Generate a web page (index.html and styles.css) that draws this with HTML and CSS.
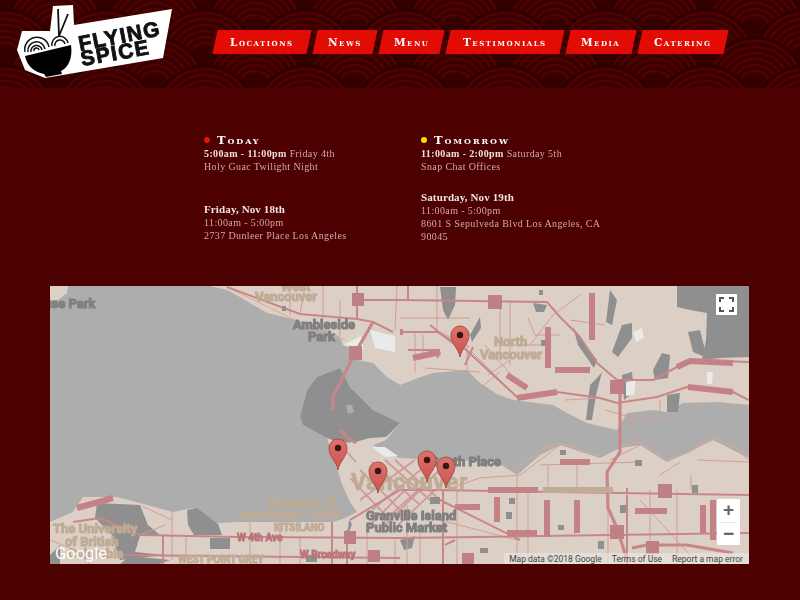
FILE: index.html
```html
<!DOCTYPE html>
<html lang="en">
<head>
<meta charset="utf-8">
<title>Flying Spice</title>
<link rel="stylesheet" href="styles.css">
</head>
<body>
<header class="header">
  <a class="logo" href="#" aria-label="Flying Spice">
    <svg class="logo-svg" viewBox="0 0 190 88" width="190" height="88">
      <polygon class="logo-bg" points="53,6 73,5 74,25 172,9 163,58 45,78 25,70 17,50 22,31 50,31"/>
      <g class="logo-ink">
        <path class="stick" d="M58 9 L59 36 M68 14 L59 36"/>
        <path class="noodle" d="M28 52 A8.500 8.500 0 0 1 45 49 M31 52 A5.500 5.500 0 0 1 42 50 M34 51 A2.500 2.500 0 0 1 39 50 M25 52 A11.500 11.500 0 0 1 49 47"/>
        <path class="noodle" d="M52 46 A8 8 0 0 1 68 43 M55 46 A5 5 0 0 1 65 44"/>
        <path class="bowl" d="M25 56 L71 45 C73 58 68 68 61 71 L62 74 L46 77 L44 74 C34 72 27 66 25 56 Z"/>
      </g>
      <text class="logo-text" transform="translate(80 51) rotate(-11)">FLYING</text>
      <text class="logo-text" transform="translate(82 66) rotate(-10)">SPICE</text>
    </svg>
  </a>
  <nav class="nav">
    <a class="nav-item nav-locations" href="#"><span>Locations</span></a>
    <a class="nav-item nav-news" href="#"><span>News</span></a>
    <a class="nav-item nav-menu" href="#"><span>Menu</span></a>
    <a class="nav-item nav-testimonials" href="#"><span>Testimonials</span></a>
    <a class="nav-item nav-media" href="#"><span>Media</span></a>
    <a class="nav-item nav-catering" href="#"><span>Catering</span></a>
  </nav>
</header>

<main class="main">
  <section class="schedule">
    <div class="column">
      <h2 class="day"><span class="dot dot-red"></span>Today</h2>
      <p class="line"><strong>5:00am - 11:00pm</strong> Friday 4th</p>
      <p class="line">Holy Guac Twilight Night</p>
      <h3 class="date date-far">Friday, Nov 18th</h3>
      <p class="line">11:00am - 5:00pm</p>
      <p class="line">2737 Dunleer Place Los Angeles</p>
    </div>
    <div class="column">
      <h2 class="day"><span class="dot dot-yellow"></span>Tomorrow</h2>
      <p class="line"><strong>11:00am - 2:00pm</strong> Saturday 5th</p>
      <p class="line">Snap Chat Offices</p>
      <h3 class="date">Saturday, Nov 19th</h3>
      <p class="line">11:00am - 5:00pm</p>
      <p class="line">8601 S Sepulveda Blvd Los Angeles, CA<br>90045</p>
    </div>
  </section>

  <section class="map">
    <svg class="map-svg" viewBox="50 286 699 278" width="699" height="278">
      <defs>
        <linearGradient id="pinfill" x1="0" y1="0" x2="0" y2="1">
          <stop offset="0" stop-color="#de746b"/>
          <stop offset="1" stop-color="#c9534d"/>
        </linearGradient>
        <g id="pin">
          <path class="pin-body" d="M0 0 C-1 -8 -9 -13 -9 -22 A9 9 0 0 1 9 -22 C9 -13 1 -8 0 0 Z"/>
          <circle class="pin-dot" cx="0" cy="-22" r="3.200"/>
        </g>
      </defs>
      <rect class="water" x="50" y="286" width="699" height="278"/>

      <!-- land -->
      <path class="land" d="M210 286 L227 290 L240 297 L267 313 L293 319 L318 326 L340 337 L343 345 L360 352 L357 360 L373 363 L387 377 L400 385 L418 378 L433 373 L467 370 L480 383 L497 394 L513 400 L553 405 L567 413 L587 423 L617 430 L627 413 L653 410 L667 412 L683 403 L717 402 L749 405 L749 286 Z"/>
      <path class="land" d="M50 286 L68 286 L67 293 L58 300 L50 300 Z"/>
      <path class="land" d="M50 522 L73 512 L83 497 L117 497 L140 503 L173 512 L193 508 L217 523 L240 522 L333 522 L345 518 L357 512 L350 502 L342 484 L337 468 L327 438 L303 425 L300 417 L307 390 L317 377 L340 368 L350 387 L373 410 L400 423 L386 440 L373 445 L400 458 L440 460 L497 462 L517 475 L540 455 L560 445 L600 458 L620 448 L640 445 L667 462 L683 455 L713 440 L749 458 L749 564 L50 564 Z"/>
      <path class="pale" d="M343 345 L361 336 L364 350 L355 346 Z M370 330 L395 336 L395 352 L375 348 Z M372 447 L385 447 L398 456 L385 457 Z"/>

      <!-- parks -->
      <path class="park" d="M677 286 L677 307 L690 310 L707 313 L706 340 L702 360 L720 358 L749 357 L749 286 Z"/>
      <path class="park" d="M300 417 L307 390 L317 377 L340 368 L350 387 L373 410 L400 423 L386 437 L370 438 L355 442 L340 443 L327 438 L303 425 Z"/>
      <path class="park" d="M97 503 L140 505 L148 525 L160 535 L140 536 L135 552 L165 555 L120 560 L112 535 L95 518 Z"/>
      <path class="park" d="M187 510 L197 508 L218 524 L222 535 L194 535 L188 525 Z M210 538 L230 538 L230 549 L210 549 Z M170 560 L160 564 L120 564 L130 556 Z"/>
      <path class="park" d="M50 555 L60 545 L60 564 L50 564 Z"/>
      <path class="park" d="M440 287 L456 287 L455 305 L448 320 L443 310 Z M470 335 L480 317 L481 328 L472 342 Z M533 303 L547 305 L544 312 L536 312 Z M573 327 L582 340 L597 360 L594 368 L578 345 Z"/>
      <path class="park" d="M610 290 L617 300 L612 325 L606 322 Z M622 325 L632 323 L632 338 L618 357 L612 352 Z M653 370 L662 353 L670 355 L668 378 L655 380 Z M667 395 L680 393 L678 412 L667 412 Z M688 332 L700 330 L707 358 L693 352 Z"/>
      <path class="park" d="M590 385 L597 378 L602 372 L596 395 L592 420 L586 420 Z M622 375 L632 372 L634 392 L624 400 Z"/>
      <path class="park" d="M349 520 L352 524 L347 538 L349 520 Z M400 540 L415 536 L412 548 L404 550 Z"/>

      <!-- water inside park -->
      <path class="water" d="M346 405 L352 405 L354 412 L348 414 Z"/>
      <path class="pale" d="M633 332 L642 328 L644 338 L636 342 Z M626 382 L636 380 L634 395 L626 396 Z M707 372 L713 372 L712 384 L707 384 Z"/>

      <!-- thin roads -->
      <g class="road-thin">
        <path d="M300 314 L305 286 M323 286 L323 318 M290 290 L290 315 M340 300 L340 336 M397 286 L395 330 M437 286 L437 332 M500 300 L500 360 M510 300 L510 365 M415 332 L415 372 M423 335 L423 356 M500 345 L550 345 M400 318 L470 318 M528 318 L535 335 L560 335 M580 295 L553 315 L530 345 M570 320 L605 325"/>
        <path d="M470 350 L510 390 M485 345 L520 385 M500 372 L470 396 M440 332 L470 347 M425 368 L480 372 M467 372 L467 345 M488 375 L510 360"/>
        <path d="M565 400 L600 398 M605 410 L640 420 M640 420 L670 415 M660 400 L660 412 M627 413 L640 440"/>
        <path class="halo" d="M227 287 L295 320 L345 340"/>
      </g>
      <g class="road-thin">
        <path d="M517 475 L517 564 M528 490 L528 564 M650 490 L650 564 M677 490 L677 564 M608 490 L608 564 M457 490 L457 564 M407 505 L407 564 M420 530 L420 564 M395 540 L395 564 M367 525 L367 564 M540 465 L640 462 M548 465 L548 490 M577 462 L577 490 M440 520 L517 540 M450 505 L490 525 M640 500 L690 555 M560 445 L520 475 L480 478 L445 490"/>
        <path d="M172 510 L172 560 M186 537 L186 562 M250 522 L250 564 M280 522 L280 564 M300 537 L300 564 M140 535 L165 525 M142 506 L172 520 M74 522 L100 518 L140 535 M50 540 L75 550 L90 564"/>
        <path d="M680 462 L660 475 M691 475 L691 490 M697 460 L749 462 M730 444 L749 460 M640 445 L610 460"/>
        <path class="halo" d="M515 470 L540 450 L560 443 L600 456 M620 446 L640 442 L667 460 L690 452 L713 437 L749 455"/>
      </g>

      <!-- downtown grid -->
      <path class="road-grid" d="M350 478 L392 522 M360 470 L405 515 M372 462 L420 505 M385 460 L430 500 M395 460 L440 500 M405 490 L370 525 M420 490 L385 525 M435 490 L398 525 M360 500 L415 460 M372 510 L430 462 M385 520 L440 470 M345 450 L356 462"/>

      <!-- main roads -->
      <g class="road">
        <path d="M227 287 L300 314 L357 319 L373 322 L393 332 M357 286 L357 319 M357 300 L400 300 L547 302 L560 317 L580 337 L597 363 L617 380"/>
        <path d="M400 332 L437 332 L463 347 L517 397 L557 392 L600 398 L617 403 L657 397 L687 387 L733 392 L749 400"/>
        <path d="M617 380 L653 380 L677 367 L690 360 L749 362 M437 358 L440 352"/>
        <path d="M473 347 L465 365 M430 325 L455 345 M408 350 L440 350 M408 285 L408 300"/>
        <path d="M117 555 L400 558 M143 535 L237 537 L400 538 M400 538 L749 533 M433 490 L749 495 M332 522 L332 564 M347 530 L347 564 M443 490 L443 564 M627 488 L627 564 M400 490 L445 490 M350 520 L400 490 M455 540 L445 545 M440 500 L520 540"/>
        <path d="M73 522 L100 518 L140 535 M163 535 L163 564"/>
      </g>
      <path class="road road-bold" d="M373 322 L355 353 L333 397 L333 410 M620 390 L620 452 L607 472 L608 508 L617 528 L627 560 M632 548 L647 545 L687 545 L733 553"/>
      <path class="road road-bold" d="M340 430 L348 438 L356 443"/>

      <!-- label-shaped road bands -->
      <g class="band">
        <path d="M592 293 L592 340 M548 327 L548 368 M555 370 L590 370 M507 375 L527 388 M517 398 L557 392 M413 358 L440 352 M677 367 L690 361 L733 363 M688 387 L733 392 M400 332 L403 332"/>
        <path d="M488 490 L538 490 M497 497 L497 522 M547 500 L547 537 M577 500 L577 533 M703 505 L703 533 M713 500 L713 540 M635 511 L667 511 M507 533 L537 533 M455 507 L480 507 M560 462 L590 462 M77 508 L113 498"/>
      </g>
      <path class="band band-tan" d="M543 490 L613 490"/>

      <!-- highway shields -->
      <g class="shield">
        <rect x="352" y="293" width="12" height="13"/>
        <rect x="488" y="295" width="14" height="14"/>
        <rect x="349" y="346" width="13" height="14"/>
        <rect x="610" y="380" width="14" height="14"/>
        <rect x="658" y="484" width="14" height="14"/>
        <rect x="610" y="525" width="14" height="14"/>
        <rect x="646" y="541" width="13" height="13"/>
        <rect x="462" y="553" width="12" height="11"/>
        <rect x="344" y="531" width="12" height="13"/>
        <rect x="368" y="550" width="12" height="12"/>
      </g>

      <!-- small buildings -->
      <g class="blocks">
        <rect x="282" y="306" width="4" height="5"/>
        <rect x="539" y="290" width="4" height="5"/>
        <rect x="541" y="340" width="4" height="6"/>
        <rect x="191" y="520" width="5" height="3"/>
        <rect x="213" y="538" width="4" height="4"/>
        <rect x="509" y="498" width="6" height="6"/>
        <rect x="506" y="512" width="6" height="7"/>
        <rect x="558" y="525" width="6" height="5"/>
        <rect x="620" y="505" width="6" height="8"/>
        <rect x="598" y="541" width="6" height="8"/>
        <rect x="480" y="548" width="8" height="5"/>
        <rect x="560" y="450" width="6" height="5"/>
        <rect x="635" y="460" width="7" height="6"/>
        <rect x="692" y="485" width="6" height="8"/>
        <rect x="306" y="555" width="11" height="7"/>
        <rect x="430" y="497" width="10" height="7"/>
      </g>

      <!-- place labels -->
      <text class="label label-tan" x="281" y="291">West</text>
      <text class="label label-tan" x="255" y="301">Vancouver</text>
      <text class="label label-grey" x="293" y="329">Ambleside</text>
      <text class="label label-grey" x="308" y="341">Park</text>
      <text class="label label-grey" x="0" y="308">Lighthouse Park</text>
      <text class="label label-tan" x="494" y="346">North</text>
      <text class="label label-tan" x="480" y="359">Vancouver</text>
      <text class="label-big" x="351" y="490">Vancouver</text>
      <text class="label label-tan" x="269" y="507">Museum of</text>
      <text class="label label-tan" x="238" y="519">Vancouver - MOV</text>
      <text class="label-small label-tan" x="274" y="531">KITSILANO</text>
      <text class="label-small label-road" x="237" y="541">W 4th Ave</text>
      <text class="label-small label-road" x="300" y="558">W Broadway</text>
      <text class="label-small label-tan" x="178" y="563">WEST POINT GREY</text>
      <text class="label label-tan" x="53" y="533">The University</text>
      <text class="label label-tan" x="65" y="546">of British</text>
      <text class="label label-tan" x="68" y="558">Columbia</text>
      <text class="label label-grey" x="366" y="520">Granville Island</text>
      <text class="label label-grey" x="366" y="532">Public Market</text>
      <text class="label label-grey" x="431" y="466">South Place</text>

      <!-- markers -->
      <use href="#pin" x="460" y="357"/>
      <use href="#pin" x="338" y="470"/>
      <use href="#pin" x="378" y="493"/>
      <use href="#pin" x="427" y="482"/>
      <use href="#pin" x="446" y="488"/>
    </svg>

    <button class="fullscreen" aria-label="Toggle fullscreen view">
      <svg viewBox="0 0 21 21" width="21" height="21">
        <path class="fs-mark" d="M4 8 V4 H8 M13 4 H17 V8 M17 13 V17 H13 M8 17 H4 V13"/>
      </svg>
    </button>
    <div class="zoom">
      <button class="zoom-btn">+</button>
      <span class="zoom-rule"></span>
      <button class="zoom-btn">−</button>
    </div>
    <span class="google">Google</span>
    <div class="attrib">
      <span>Map data ©2018 Google</span>
      <span>Terms of Use</span>
      <span>Report a map error</span>
    </div>
  </section>
</main>
</body>
</html>
```

FILE: styles.css
```css
* { box-sizing: border-box; }

html, body { margin: 0; padding: 0; }

body {
  width: 800px;
  height: 600px;
  overflow: hidden;
  background: #4c0000;
  font-family: "Liberation Serif", serif;
}

/* header */
.header {
  display: flex;
  height: 88px;
  background-color: #340000;
  background-image: url("data:image/svg+xml,%3Csvg xmlns='http://www.w3.org/2000/svg' width='100' height='56'%3E%3Cdefs%3E%3Cg id='c' fill='none' stroke='%234f0000' stroke-width='3'%3E%3Ccircle cy='50' r='50' fill='%23340000' stroke='%232c0000'/%3E%3Ccircle cy='50' r='47'/%3E%3Ccircle cy='50' r='41'/%3E%3Ccircle cy='50' r='35'/%3E%3Ccircle cy='50' r='29'/%3E%3Ccircle cy='50' r='23'/%3E%3Ccircle cy='50' r='17'/%3E%3C/g%3E%3C/defs%3E%3Cuse href='%23c' x='55' y='-74'/%3E%3Cuse href='%23c' x='-45' y='-74'/%3E%3Cuse href='%23c' x='5' y='-46'/%3E%3Cuse href='%23c' x='105' y='-46'/%3E%3Cuse href='%23c' x='55' y='-18'/%3E%3Cuse href='%23c' x='-45' y='-18'/%3E%3Cuse href='%23c' x='155' y='-18'/%3E%3Cuse href='%23c' x='5' y='10'/%3E%3Cuse href='%23c' x='105' y='10'/%3E%3Cuse href='%23c' x='55' y='38'/%3E%3Cuse href='%23c' x='-45' y='38'/%3E%3Cuse href='%23c' x='155' y='38'/%3E%3C/svg%3E");
}

.logo { display: block; width: 190px; height: 88px; margin-right: 24.500px; flex: none; }
.logo-svg { display: block; filter: blur(.3px); }
.logo-bg { fill: #fff; }
.stick { fill: none; stroke: #111; stroke-width: 1.800; }
.noodle { fill: none; stroke: #111; stroke-width: 1.500; }
.bowl { fill: #000; }
.logo-text {
  font-family: "Liberation Sans", sans-serif;
  font-weight: 700;
  font-size: 21px;
  letter-spacing: 1.400px;
  fill: #111;
  stroke: #111;
  stroke-width: .9px;
}

.nav { display: flex; gap: 6px; height: 24px; margin-top: 30px; }
.nav-item {
  display: flex;
  align-items: center;
  justify-content: center;
  height: 24px;
  background: #e20c04;
  transform: skewX(-12deg);
  text-decoration: none;
}
.nav-item span {
  display: block;
  transform: skewX(12deg);
  color: #fff;
  font-family: "DejaVu Serif", serif;
  font-weight: 700;
  font-variant: small-caps;
  font-size: 10.500px;
  letter-spacing: 1.500px;
  filter: blur(.4px);
}
.nav-locations { width: 94px; }
.nav-news { width: 60px; }
.nav-menu { width: 61px; }
.nav-testimonials { width: 114px; }
.nav-media { width: 66px; }
.nav-catering { width: 86px; }

/* schedule */
.main { display: flex; flex-direction: column; align-items: flex-start; }
.schedule {
  display: grid;
  grid-template-columns: 217px 210px;
  height: 198px;
  margin-left: 204px;
  padding-top: 45px;
  filter: blur(.45px);
}
.column { min-width: 0; }
.day {
  display: flex;
  align-items: center;
  height: 13px;
  margin: 0 0 1px;
  color: #fff;
  font-family: "DejaVu Serif", serif;
  font-weight: 700;
  font-variant: small-caps;
  font-size: 11.500px;
  letter-spacing: 1.900px;
}
.dot {
  display: block;
  width: 6px;
  height: 6px;
  margin-right: 7px;
  border-radius: 50%;
}
.dot-red { background: #e8110c; }
.dot-yellow { background: #f2e000; }
.line {
  margin: 0;
  color: #d2a9a9;
  font-size: 10px;
  line-height: 13px;
  letter-spacing: .38px;
}
.line strong { color: #f0dede; font-weight: 700; }
.date {
  margin: 18px 0 0;
  color: #f3e4e4;
  font-size: 11px;
  line-height: 13px;
  font-weight: 700;
  letter-spacing: .12px;
}
.date-far { margin-top: 30px; }

/* map */
.map {
  position: relative;
  width: 699px;
  height: 278px;
  margin-left: 50px;
  overflow: hidden;
}
.map-svg { display: block; filter: blur(.4px); }
.water { fill: #adadad; }
.land { fill: #dccfc5; }
.pale { fill: #eaeaea; }
.park { fill: #8f8f8f; }
.road, .road-thin, .road-grid, .band { fill: none; stroke-linejoin: round; }
.road { stroke: #c9868a; stroke-width: 2; }
.road-bold { stroke-width: 3.200; }
.road-thin { stroke: #d49d9a; stroke-width: 1; }
.road-thin .halo { stroke: #e0a994; }
.road-grid { stroke: #cf9a9b; stroke-width: 1.800; }
.band { stroke: #c58286; stroke-width: 6; }
.band-tan { stroke: #bfab96; }
.shield rect { fill: #be8085; }
.blocks rect { fill: #8f8f8f; }
.label {
  font-family: "Roboto", sans-serif;
  font-size: 13px;
  font-weight: 700;
  stroke-width: 1px;
}
.label-big {
  fill: #bfab96;
  stroke: #bfab96;
  stroke-width: .6px;
  font-family: "Roboto", sans-serif;
  font-size: 23px;
  font-weight: 700;
  letter-spacing: .8px;
}
.label-small { font-family: "Roboto", sans-serif; font-size: 10px; font-weight: 700; stroke-width: .8px; }
.label-tan { fill: #bfab96; stroke: #bfab96; }
.label-grey { fill: #7f7f7f; stroke: #7f7f7f; }
.label-road { fill: #b9747a; stroke: #b9747a; }
.pin-body { fill: url(#pinfill); stroke: #a84e49; stroke-width: 1; }
.pin-dot { fill: #3c1414; }

.fullscreen {
  position: absolute;
  top: 8px;
  right: 12px;
  width: 21px;
  height: 21px;
  padding: 0;
  border: 0;
  border-radius: 1px;
  background: #fff;
}
.fullscreen svg { display: block; }
.fs-mark { fill: none; stroke: #555; stroke-width: 2; }

.zoom {
  position: absolute;
  top: 213px;
  right: 9px;
  display: flex;
  flex-direction: column;
  align-items: center;
  width: 23px;
  height: 46px;
  border-radius: 1px;
  background: #fff;
}
.zoom-btn {
  width: 23px;
  height: 22.500px;
  padding: 0;
  border: 0;
  background: none;
  color: #666;
  font-family: "Liberation Sans", sans-serif;
  font-size: 19px;
  font-weight: 700;
  line-height: 22px;
}
.zoom-rule { width: 17px; height: 1px; background: #e6e6e6; }

.google {
  position: absolute;
  left: 5px;
  bottom: 1px;
  color: #fff;
  font-family: "Roboto", sans-serif;
  font-size: 16.500px;
  line-height: 18px;
}

.attrib {
  position: absolute;
  right: 0;
  bottom: 0;
  display: flex;
  gap: 10px;
  height: 11px;
  padding: 0 6px 0 5px;
  background: rgba(235, 232, 228, .6);
  color: #444;
  font-family: "Roboto", sans-serif;
  font-size: 8.500px;
  line-height: 12px;
  white-space: nowrap;
}
```
